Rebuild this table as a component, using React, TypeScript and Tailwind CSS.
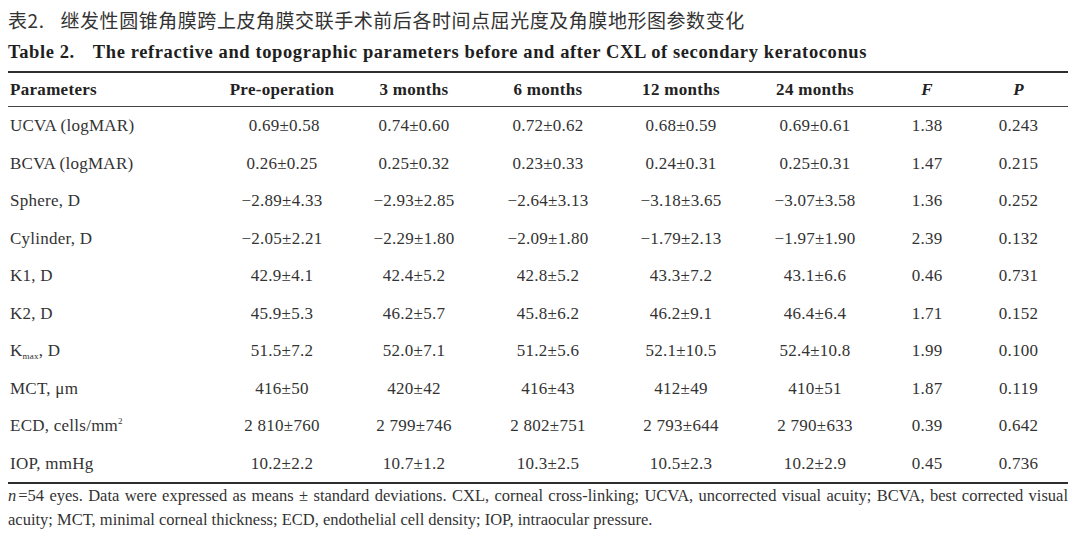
import React from "react";

const serif = { fontFamily: '"Liberation Serif", "Times New Roman", serif' };

const cols = "grid grid-cols-[207px_134px_130px_138px_128px_140px_84px_99px] items-center";

type Row = { label: React.ReactNode; vals: string[] };

const rows: Row[] = [
  { label: "UCVA (logMAR)", vals: ["\u00a00.69±0.58", "0.74±0.60", "0.72±0.62", "0.68±0.59", "0.69±0.61", "1.38", "0.243"] },
  { label: "BCVA (logMAR)", vals: ["0.26±0.25", "0.25±0.32", "0.23±0.33", "0.24±0.31", "0.25±0.31", "1.47", "0.215"] },
  { label: "Sphere, D", vals: ["−2.89±4.33", "−2.93±2.85", "−2.64±3.13", "−3.18±3.65", "−3.07±3.58", "1.36", "0.252"] },
  { label: "Cylinder, D", vals: ["−2.05±2.21", "−2.29±1.80", "−2.09±1.80", "−1.79±2.13", "−1.97±1.90", "2.39", "0.132"] },
  { label: "K1, D", vals: ["42.9±4.1", "42.4±5.2", "42.8±5.2", "43.3±7.2", "43.1±6.6", "0.46", "0.731"] },
  { label: "K2, D", vals: ["45.9±5.3", "46.2±5.7", "45.8±6.2", "46.2±9.1", "46.4±6.4", "1.71", "0.152"] },
  {
    label: (
      <>
        K<sub className="text-[9px] align-baseline relative top-[3px]">max</sub>, D
      </>
    ),
    vals: ["51.5±7.2", "52.0±7.1", "51.2±5.6", "52.1±10.5", "52.4±10.8", "1.99", "0.100"],
  },
  { label: "MCT, μm", vals: ["416±50", "420±42", "416±43", "412±49", "410±51", "1.87", "0.119"] },
  {
    label: (
      <>
        ECD, cells/mm<sup className="text-[9px] align-baseline relative -top-[7px]">2</sup>
      </>
    ),
    vals: ["2 810±760", "2 799±746", "2 802±751", "2 793±644", "2 790±633", "0.39", "0.642"],
  },
  { label: "IOP, mmHg", vals: ["10.2±2.2", "10.7±1.2", "10.3±2.5", "10.5±2.3", "10.2±2.9", "0.45", "0.736"] },
];

export default function App() {
  return (
    <div className="w-[1080px] h-[539px] bg-white text-[#2b2b2b] overflow-hidden pt-[7px] pl-2">
      <p
        className="text-[19px] leading-[26px] tracking-[0.55px] text-[#333]"
        style={{ fontFamily: '"Noto Sans CJK SC", "Noto Sans", sans-serif' }}
      >
        表2.<span className="inline-block w-[16px]" />继发性圆锥角膜跨上皮角膜交联手术前后各时间点屈光度及角膜地形图参数变化
      </p>
      <p className="mt-[6px] text-[18.5px] leading-[26px] font-bold tracking-[0.6px] text-[#1e1e1e]" style={serif}>
        Table 2.<span className="inline-block w-[18px]" />The refractive and topographic parameters before and after CXL of secondary keratoconus
      </p>

      <div className="mt-[6px] w-[1060px] border-t-2 border-b-2 border-[#2e2e2e]" style={serif}>
        <div className={`${cols} h-[34px] border-b border-[#444] text-[17px] font-bold tracking-[0.3px] text-[#222]`}>
          <div className="pl-[2px]">Parameters</div>
          <div className="text-center">Pre-operation</div>
          <div className="text-center">3 months</div>
          <div className="text-center">6 months</div>
          <div className="text-center">12 months</div>
          <div className="text-center">24 months</div>
          <div className="text-center italic">F</div>
          <div className="text-center italic">P</div>
        </div>
        {rows.map((r, i) => (
          <div key={i} className={`${cols} h-[37.5px] text-[17px] tracking-[0.25px] text-[#333]`}>
            <div className="pl-[2px] whitespace-nowrap">{r.label}</div>
            {r.vals.map((v, j) => (
              <div key={j} className="text-center whitespace-pre">
                {v}
              </div>
            ))}
          </div>
        ))}
      </div>

      <p className="w-[1060px] text-[16.5px] leading-[24px] text-justify text-[#333]" style={serif}>
        <i className="pr-[2px]">n</i>=54 eyes. Data were expressed as means ± standard deviations. CXL, corneal cross-linking; UCVA,
        uncorrected visual acuity; BCVA, best corrected visual acuity; MCT, minimal corneal thickness; ECD,
        endothelial cell density; IOP, intraocular pressure.
      </p>
    </div>
  );
}
